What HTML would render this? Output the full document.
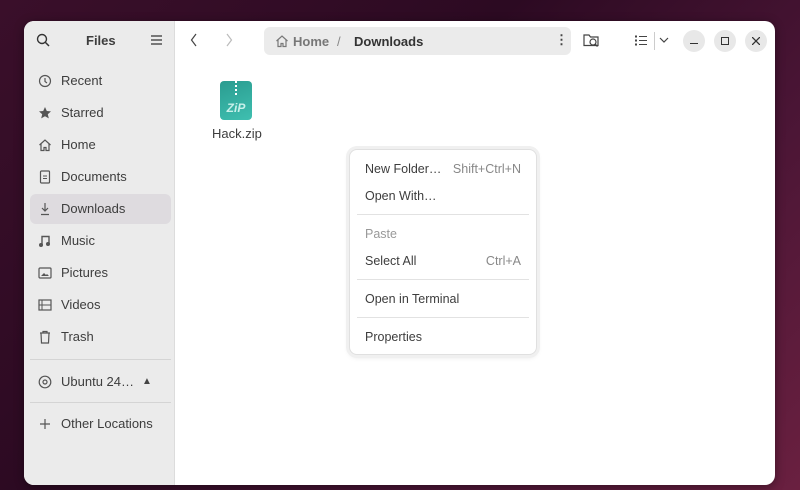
<!DOCTYPE html>
<html><head><style>
*{margin:0;padding:0;box-sizing:border-box}
body{width:800px;height:490px;overflow:hidden;font-family:"Liberation Sans",sans-serif;background:linear-gradient(135deg,#3a0f2a 0%,#2c0a22 40%,#4a1535 70%,#6a2040 100%);position:relative}
.win{position:absolute;left:24px;top:21px;width:751px;height:464px;border-radius:10px;background:#fff;overflow:hidden;box-shadow:0 2px 10px rgba(0,0,0,.4)}
.side{position:absolute;left:0;top:0;width:151px;height:464px;background:#ebebeb;border-right:1px solid #dcdcdc}
.t{position:absolute;font-size:13px;color:#3d3d3d;white-space:nowrap}
.it{position:absolute;left:14px;font-size:13px;color:#3d3d3d;white-space:nowrap;height:20px;line-height:20px}
.it svg{position:absolute;left:0;top:3px}
.it span{position:absolute;left:23px}
.sel{position:absolute;left:6px;top:173px;width:141px;height:30px;background:#dedbdf;border-radius:6px}
.sep{position:absolute;left:6px;width:141px;height:1px;background:#d4d4d4}
.path{position:absolute;left:240px;top:6px;width:307px;height:28px;background:#ebebeb;border-radius:6px}
.btn{position:absolute;top:9px;width:22px;height:22px;border-radius:50%;background:#e8e8e8}
.menu{position:absolute;left:325px;top:128px;width:188px;height:206px;background:#fff;border-radius:8px;border:1px solid #e0e0e0;box-shadow:0 0 0 3px #f0f0f0,0 2px 6px rgba(0,0,0,.12)}
.m{position:absolute;left:15px;font-size:12.5px;color:#3d3d3d;white-space:nowrap}
.k{position:absolute;right:15px;font-size:12.5px;color:#888}
.ms{position:absolute;left:7px;right:7px;height:1px;background:#e2e2e2}
</style></head><body>
<div class="win">
<div class="side">
<svg style="position:absolute;left:12px;top:12px" width="14" height="14" viewBox="0 0 14 14"><circle cx="6" cy="6" r="4.5" fill="none" stroke="#333" stroke-width="1.4"/><path d="M9.5 9.5L13 13" stroke="#333" stroke-width="1.5"/></svg>
<div class="t" style="left:62px;top:12px;font-weight:bold;font-size:13px">Files</div>
<svg style="position:absolute;left:127px;top:14px" width="11" height="10"><path d="M0 1h11M0 5h11M0 9h11" stroke="#333" stroke-width="1.2"/></svg>
<div class="sel"></div>
<div class="it" style="top:50px"><svg width="14" height="14"><circle cx="7" cy="7" r="5.5" fill="none" stroke="#555" stroke-width="1.2"/><path d="M7 4v3.5l2 1.5" stroke="#555" fill="none" stroke-width="1.2"/></svg><span>Recent</span></div>
<div class="it" style="top:82px"><svg width="14" height="14"><path d="M7 1l1.8 4 4.2.4-3.2 2.8 1 4.2L7 10.2 3.2 12.4l1-4.2L1 5.4l4.2-.4z" fill="#555"/></svg><span>Starred</span></div>
<div class="it" style="top:114px"><svg width="14" height="14"><path d="M1.5 7L7 2l5.5 5M3 6v6.5h3v-3h2v3h3V6" fill="none" stroke="#555" stroke-width="1.2"/></svg><span>Home</span></div>
<div class="it" style="top:146px"><svg width="14" height="14"><rect x="2.5" y="1" width="9" height="12" rx="1" fill="none" stroke="#555" stroke-width="1.2"/><path d="M5 6h4M5 8.5h4" stroke="#555"/></svg><span>Documents</span></div>
<div class="it" style="top:178px"><svg width="14" height="14"><path d="M7 1v8M4 6l3 3 3-3M3 12.5h8" fill="none" stroke="#555" stroke-width="1.2"/></svg><span>Downloads</span></div>
<div class="it" style="top:210px"><svg width="14" height="14"><path d="M4 11V2.5h7V10" fill="none" stroke="#555" stroke-width="1.4"/><circle cx="3" cy="11" r="2" fill="#555"/><circle cx="10" cy="10" r="2" fill="#555"/></svg><span>Music</span></div>
<div class="it" style="top:242px"><svg width="14" height="14"><rect x="1" y="2" width="12" height="10" rx="1" fill="none" stroke="#555" stroke-width="1.2"/><path d="M3 10l3-3 2 2 1-1 2 2z" fill="#555"/></svg><span>Pictures</span></div>
<div class="it" style="top:274px"><svg width="14" height="14"><rect x="1" y="2" width="12" height="10" fill="none" stroke="#555" stroke-width="1.2"/><path d="M4 2v10M1 7h12" stroke="#555"/></svg><span>Videos</span></div>
<div class="it" style="top:306px"><svg width="14" height="14"><path d="M2 3h10M5 3V1.5h4V3M3 3l.5 10h7L11 3" fill="none" stroke="#555" stroke-width="1.2"/></svg><span>Trash</span></div>
<div class="sep" style="top:338px"></div>
<div class="it" style="top:351px"><svg width="14" height="14"><circle cx="7" cy="7" r="5.8" fill="none" stroke="#555" stroke-width="1.2"/><circle cx="7" cy="7" r="2" fill="none" stroke="#555" stroke-width="1.2"/></svg><span>Ubuntu 24…</span></div>
<div class="t" style="left:118px;top:355px;font-size:10px;color:#444">▲</div>
<div class="sep" style="top:381px"></div>
<div class="it" style="top:393px"><svg width="14" height="14"><path d="M7 2v10M2 7h10" stroke="#555" stroke-width="1.2"/></svg><span>Other Locations</span></div>
</div>
<svg style="position:absolute;left:166px;top:12px" width="8" height="14"><path d="M6 1L1.5 7 6 13" fill="none" stroke="#444" stroke-width="1.2"/></svg>
<svg style="position:absolute;left:201px;top:12px" width="8" height="14"><path d="M2 1l4.5 6L2 13" fill="none" stroke="#bbb" stroke-width="1.2"/></svg>
<div class="path">
<svg style="position:absolute;left:11px;top:7px" width="14" height="14"><path d="M1.5 7L7 2l5.5 5M3 6v6.5h3v-3h2v3h3V6" fill="none" stroke="#777" stroke-width="1.2"/></svg>
<div class="t" style="left:29px;top:7px;color:#777;font-weight:bold">Home</div>
<div class="t" style="left:73px;top:7px;color:#888">/</div>
<div class="t" style="left:90px;top:7px;font-weight:bold;color:#333">Downloads</div>
<div class="t" style="left:291px;top:5px;font-weight:bold;color:#444">⋮</div>
</div>
<svg style="position:absolute;left:559px;top:11px" width="17" height="16"><path d="M1 3h5l1.5 2H15v8.5H1z" fill="none" stroke="#444" stroke-width="1.2"/><circle cx="10" cy="10" r="3" fill="#fff" stroke="#444" stroke-width="1.2"/><path d="M12 12l2.5 2.5" stroke="#444" stroke-width="1.3"/></svg>
<svg style="position:absolute;left:611px;top:14px" width="12" height="11"><path d="M4 1.5h8M4 5.5h8M4 9.5h8" stroke="#444" stroke-width="1.1"/><rect x="0" y="0.5" width="2" height="2" fill="#444"/><rect x="0" y="4.5" width="2" height="2" fill="#444"/><rect x="0" y="8.5" width="2" height="2" fill="#444"/></svg>
<div style="position:absolute;left:630px;top:11px;width:1px;height:18px;background:#ccc"></div>
<svg style="position:absolute;left:635px;top:16px" width="10" height="7"><path d="M1 1l4 4 4-4" fill="none" stroke="#444" stroke-width="1.2"/></svg>
<div class="btn" style="left:659px"><div style="position:absolute;left:7px;top:13px;width:8px;height:1.3px;background:#333"></div></div>
<div class="btn" style="left:690px"><div style="position:absolute;left:7px;top:7px;width:8px;height:8px;border:1.3px solid #333"></div></div>
<div class="btn" style="left:721px"><svg style="position:absolute;left:7px;top:7px" width="8" height="8"><path d="M0 0l8 8M8 0L0 8" stroke="#333" stroke-width="1.3"/></svg></div>
<div style="position:absolute;left:196px;top:60px;width:32px;height:39px;border-radius:4px;background:linear-gradient(160deg,#2a9c90,#3fbfb0)">
<div style="position:absolute;left:15px;top:0;width:2px;height:16px;background:repeating-linear-gradient(#fff 0 2px,transparent 2px 4px)"></div>
<div style="position:absolute;left:0;width:32px;top:20px;text-align:center;color:#c8f0ea;font-weight:bold;font-style:italic;font-size:12px">ZiP</div>
</div>
<div class="t" style="left:188px;top:105px">Hack.zip</div>
<div class="menu">
<div class="m" style="top:12px">New Folder…</div><div class="k" style="top:12px">Shift+Ctrl+N</div>
<div class="m" style="top:39px">Open With…</div>
<div class="ms" style="top:64px"></div>
<div class="m" style="top:77px;color:#999">Paste</div>
<div class="m" style="top:104px">Select All</div><div class="k" style="top:104px">Ctrl+A</div>
<div class="ms" style="top:129px"></div>
<div class="m" style="top:142px">Open in Terminal</div>
<div class="ms" style="top:167px"></div>
<div class="m" style="top:180px">Properties</div>
</div>
</div>
</body></html>
